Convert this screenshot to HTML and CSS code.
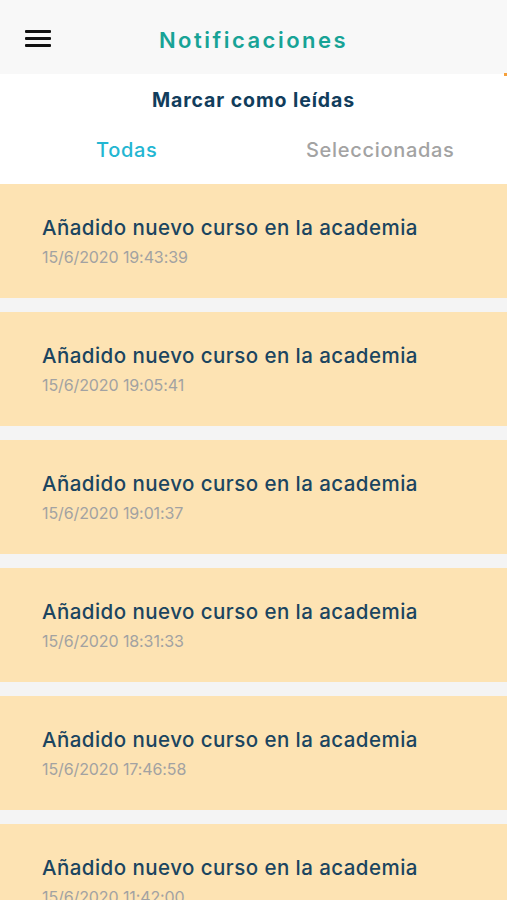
FILE: index.html
```html
<!DOCTYPE html>
<html lang="es">
<head>
<meta charset="utf-8">
<title>Notificaciones</title>
<link rel="stylesheet" href="styles.css">
</head>
<body>
<header class="topbar">
  <button class="menu" aria-label="Menú">
    <span></span><span></span><span></span>
  </button>
  <h1 class="title">Notificaciones</h1>
  <span class="scroll-dot"></span>
</header>
<section class="actions">
  <div class="mark">Marcar como leídas</div>
  <nav class="tabs">
    <div class="tab active">Todas</div>
    <div class="tab">Seleccionadas</div>
  </nav>
</section>
<main class="list">
  <article class="card"><div class="card-title">Añadido nuevo curso en la academia</div><div class="card-date">15/6/2020 19:43:39</div></article>
  <article class="card"><div class="card-title">Añadido nuevo curso en la academia</div><div class="card-date">15/6/2020 19:05:41</div></article>
  <article class="card"><div class="card-title">Añadido nuevo curso en la academia</div><div class="card-date">15/6/2020 19:01:37</div></article>
  <article class="card"><div class="card-title">Añadido nuevo curso en la academia</div><div class="card-date">15/6/2020 18:31:33</div></article>
  <article class="card"><div class="card-title">Añadido nuevo curso en la academia</div><div class="card-date">15/6/2020 17:46:58</div></article>
  <article class="card"><div class="card-title">Añadido nuevo curso en la academia</div><div class="card-date">15/6/2020 11:42:00</div></article>
</main>
</body>
</html>
```
FILE: styles.css
```css
* { box-sizing: border-box; }
html, body { margin: 0; padding: 0; }
body {
  width: 507px;
  height: 900px;
  overflow: hidden;
  background: #f4f4f4;
  font-family: "Inter", "Noto Sans", sans-serif;
}
.topbar {
  position: relative;
  height: 74px;
  background: #f8f8f8;
  display: flex;
  align-items: center;
  justify-content: center;
  padding-top: 5px;
}
.menu {
  position: absolute;
  left: 25px;
  top: 30px;
  width: 26px;
  height: 17px;
  padding: 0;
  border: 0;
  background: none;
  display: flex;
  flex-direction: column;
  justify-content: space-between;
}
.menu span {
  display: block;
  height: 3px;
  background: #111;
  border-radius: 1px;
}
.title {
  margin: 0;
  font-size: 22px;
  font-weight: 600;
  letter-spacing: 2.5px;
  color: #17a396;
}
.scroll-dot {
  position: absolute;
  right: 0;
  bottom: -2px;
  width: 3px;
  height: 3px;
  background: #f5a03c;
}
.actions {
  background: #fff;
  height: 110px;
  display: flex;
  flex-direction: column;
}
.mark {
  text-align: center;
  font-size: 19.5px;
  font-weight: 700;
  letter-spacing: 0.9px;
  color: #113d5c;
  padding-top: 14px;
  height: 52px;
}
.tabs {
  display: flex;
}
.tab {
  flex: 1;
  text-align: center;
  font-size: 20px;
  font-weight: 500;
  letter-spacing: 0.7px;
  color: #a3a3a3;
  padding-top: 12px;
}
.tab.active { color: #23b6d2; }
.list {
  display: flex;
  flex-direction: column;
  gap: 14px;
}
.card {
  height: 114px;
  background: #fde3b3;
  padding: 31px 42px 0;
}
.card-title {
  font-size: 20.5px;
  font-weight: 500;
  letter-spacing: 0.45px;
  color: #1b4560;
  line-height: 26px;
}
.card-date {
  margin-top: 5px;
  font-size: 16px;
  color: #a2a2a2;
  line-height: 22px;
  letter-spacing: -0.1px;
}
```
